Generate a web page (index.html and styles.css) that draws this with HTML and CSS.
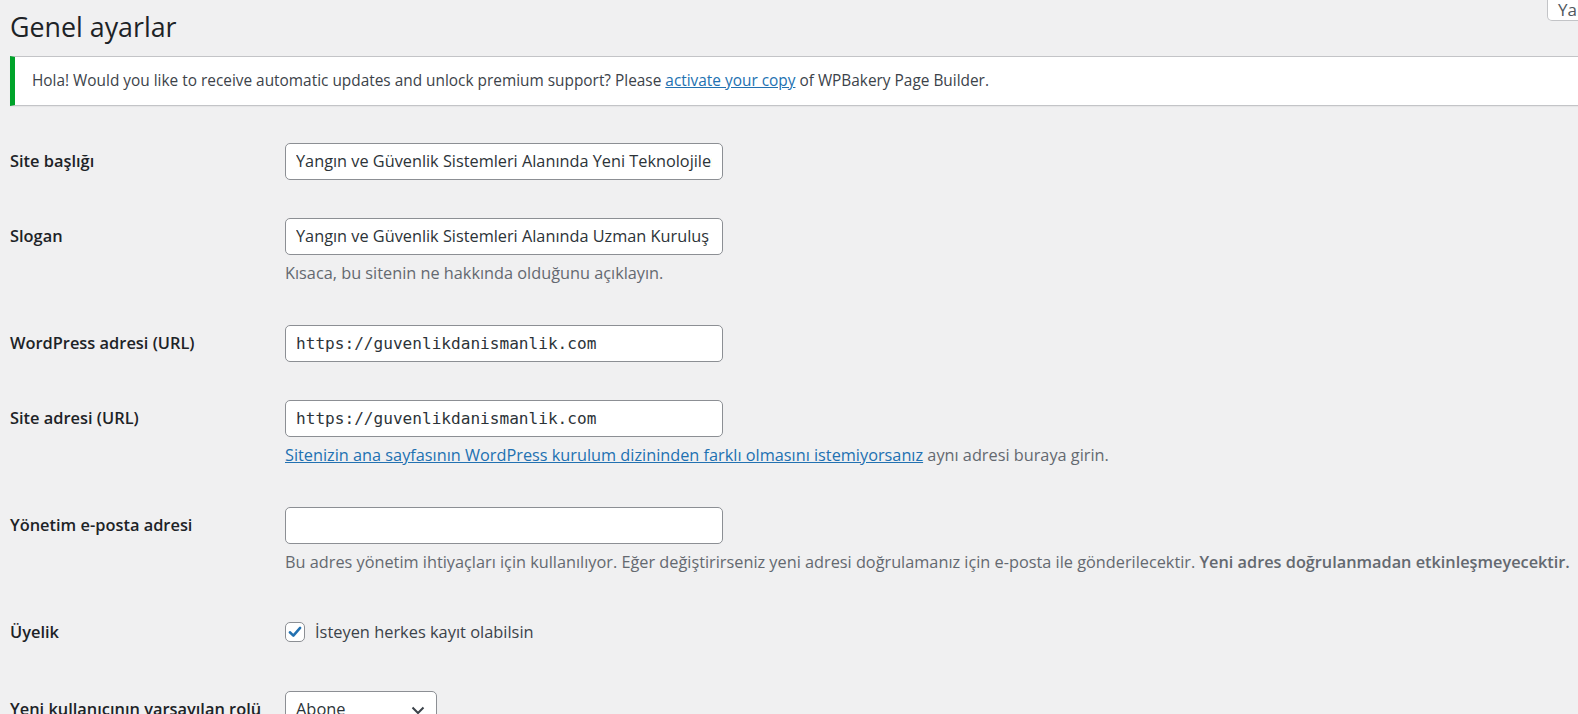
FILE: index.html
```html
<!DOCTYPE html>
<html lang="tr">
<head>
    <meta charset="UTF-8">
    <meta name="viewport" content="width=device-width, initial-scale=1.0">
    <title>Genel ayarlar</title>
    <link rel="stylesheet" href="styles.css">
</head>
<body>
    <div class="screen-meta">
        <button class="help-tab" type="button">Yardım</button>
    </div>

    <div class="wrap">
        <h1>Genel ayarlar</h1>

        <div class="notice">
            <p>Hola! Would you like to receive automatic updates and unlock premium support? Please <a href="#">activate your copy</a> of WPBakery Page Builder.</p>
        </div>

        <table class="form-table">
            <colgroup>
                <col class="col-label">
                <col>
            </colgroup>
            <tr>
                <th><label for="blogname">Site başlığı</label></th>
                <td><input id="blogname" class="regular-text" type="text" value="Yangın ve Güvenlik Sistemleri Alanında Yeni Teknolojiler"></td>
            </tr>
            <tr>
                <th><label for="blogdescription">Slogan</label></th>
                <td>
                    <input id="blogdescription" class="regular-text" type="text" value="Yangın ve Güvenlik Sistemleri Alanında Uzman Kuruluş">
                    <p class="description">Kısaca, bu sitenin ne hakkında olduğunu açıklayın.</p>
                </td>
            </tr>
            <tr>
                <th><label for="siteurl">WordPress adresi (URL)</label></th>
                <td><input id="siteurl" class="regular-text code" type="url" value="https://guvenlikdanismanlik.com"></td>
            </tr>
            <tr>
                <th><label for="home">Site adresi (URL)</label></th>
                <td>
                    <input id="home" class="regular-text code" type="url" value="https://guvenlikdanismanlik.com">
                    <p class="description"><a href="#">Sitenizin ana sayfasının WordPress kurulum dizininden farklı olmasını istemiyorsanız</a> aynı adresi buraya girin.</p>
                </td>
            </tr>
            <tr>
                <th><label for="new_admin_email">Yönetim e-posta adresi</label></th>
                <td>
                    <input id="new_admin_email" class="regular-text" type="email" value="">
                    <p class="description">Bu adres yönetim ihtiyaçları için kullanılıyor. Eğer değiştirirseniz yeni adresi doğrulamanız için e-posta ile gönderilecektir. <strong>Yeni adres doğrulanmadan etkinleşmeyecektir.</strong></p>
                </td>
            </tr>
            <tr>
                <th>Üyelik</th>
                <td>
                    <label class="check">
                        <input type="checkbox" checked>
                        <span class="box">
                            <svg viewBox="0 0 20 20" width="18" height="18"><path d="M4.3 10.3l3.9 3.8 7.5-8.7" fill="none" stroke="#2271b1" stroke-width="2.8" stroke-linecap="round" stroke-linejoin="round"/></svg>
                        </span>
                        İsteyen herkes kayıt olabilsin
                    </label>
                </td>
            </tr>
            <tr>
                <th><label for="default_role">Yeni kullanıcının varsayılan rolü</label></th>
                <td>
                    <div class="select" id="default_role">
                        <span>Abone</span>
                        <svg viewBox="0 0 20 20" width="20" height="20"><path d="M4.5 7.5l5.5 5.5 5.5-5.5" fill="none" stroke="#3c434a" stroke-width="2"/></svg>
                    </div>
                </td>
            </tr>
        </table>
    </div>
</body>
</html>
```

FILE: styles.css
```css
html, body {
    margin: 0;
    padding: 0;
    overflow: hidden;
}
body {
    background: #f0f0f1;
    color: #3c434a;
    font-family: "Open Sans", "Noto Sans", sans-serif;
    font-size: 15.4px;
    line-height: 1.4;
}
a { color: #2271b1; }

/* help tab hanging from the top edge */
.screen-meta {
    position: absolute;
    top: 0;
    right: 0;
}
.help-tab {
    box-sizing: border-box;
    display: block;
    margin-right: -60px;
    width: 91px;
    height: 21px;
    padding: 0 0 0 10px;
    text-align: left;
    vertical-align: top;
    background: #fff;
    border: 1px solid #c3c4c7;
    border-top: none;
    border-radius: 0 0 5px 5px;
    color: #50575e;
    font-family: inherit;
    font-size: 17px;
    line-height: 6px;
    overflow: hidden;
}

.wrap {
    padding: 0 0 0 10px;
}
h1 {
    margin: 0;
    padding: 10px 0 8px;
    font-size: 26.8px;
    font-weight: 400;
    line-height: 34.8px;
    color: #1d2327;
}

.notice {
    background: #fff;
    border: 1px solid #c3c4c7;
    border-left: 5px solid #00a32a;
    border-right: none;
    margin: 3px 0 18px;
    padding: 0 15px 0 17px;
    box-shadow: 0 1px 1px rgba(0,0,0,0.04);
}
.notice p {
    margin: 0;
    padding: 12px 0;
    font-size: 15.4px;
    line-height: 24px;
    color: #3c434a;
}

.form-table {
    border-collapse: collapse;
    table-layout: fixed;
    width: 100%;
}
.form-table .col-label { width: 262.5px; }
.form-table th {
    padding: 26px 12.5px 25px 0;
    text-align: left;
    vertical-align: top;
    font-size: 16.4px;
    font-weight: 600;
    line-height: 22.75px;
    color: #1d2327;
    white-space: nowrap;
}
.form-table td {
    padding: 18.75px 12.5px;
    vertical-align: top;
    font-size: 16.4px;
    line-height: 22.75px;
}
.regular-text {
    box-sizing: border-box;
    display: block;
    width: 437.5px;
    height: 37.5px;
    margin: 0;
    padding: 0 10px;
    background: #fff;
    border: 1px solid #8c8f94;
    border-radius: 5px;
    color: #2c3338;
    font-family: inherit;
    font-size: 16.3px;
}
.regular-text.code {
    font-family: "DejaVu Sans Mono", monospace;
    font-size: 16.1px;
}
.description {
    margin: 5px 0 0;
    font-size: 16.3px;
    line-height: 27px;
    color: #646970;
    white-space: nowrap;
}
.description strong { font-weight: 600; }

/* membership checkbox */
.check {
    display: flex;
    align-items: center;
    gap: 10px;
    padding: 5px 0 9px;
    line-height: 26px;
    color: #3c434a;
}
.check input { display: none; }
.check .box {
    box-sizing: border-box;
    width: 20px;
    height: 20px;
    background: #fff;
    border: 1px solid #8c8f94;
    border-radius: 5px;
    display: flex;
    align-items: center;
    justify-content: center;
}

.select {
    box-sizing: border-box;
    width: 152px;
    height: 37.5px;
    padding: 0 8px 0 10px;
    display: flex;
    align-items: center;
    justify-content: space-between;
    background: #fff;
    border: 1px solid #8c8f94;
    border-radius: 5px;
    color: #2c3338;
}
```
